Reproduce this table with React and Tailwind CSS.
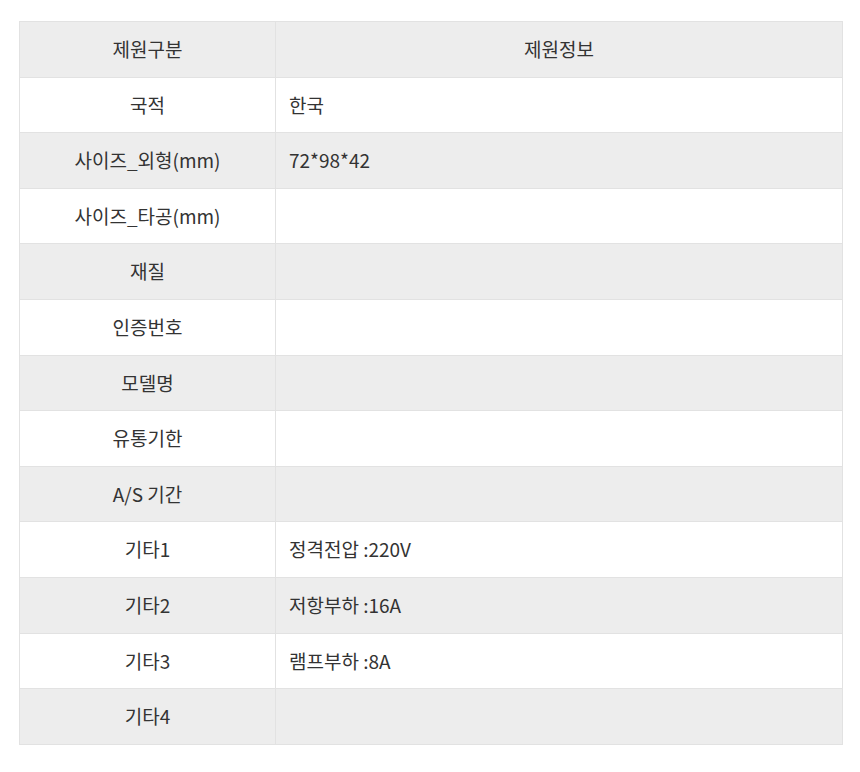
import React from "react";

const rows = [
  ["국적", "한국"],
  ["사이즈_외형(mm)", "72*98*42"],
  ["사이즈_타공(mm)", ""],
  ["재질", ""],
  ["인증번호", ""],
  ["모델명", ""],
  ["유통기한", ""],
  ["A/S 기간", ""],
  ["기타1", "정격전압 :220V"],
  ["기타2", "저항부하 :16A"],
  ["기타3", "램프부하 :8A"],
  ["기타4", ""],
];

export default function App() {
  return (
    <div
      className="w-[860px] h-[772px] bg-white pt-[21px] pl-[19px]"
      style={{ fontFamily: '"Noto Sans CJK KR", "Noto Sans", sans-serif' }}
    >
      <table className="w-[824px] border-collapse text-[19px] text-[#333]">
        <thead>
          <tr className="h-[55.6px] bg-[#ededed]">
            <th className="w-[256px] border border-[#e2e2e2] font-normal text-center">
              제원구분
            </th>
            <th className="border border-[#e2e2e2] font-normal text-center">
              제원정보
            </th>
          </tr>
        </thead>
        <tbody>
          {rows.map(([label, value], i) => (
            <tr
              key={label}
              className={`h-[55.6px] ${i % 2 === 1 ? "bg-[#ededed]" : "bg-white"}`}
            >
              <td className="border border-[#e2e2e2] text-center">{label}</td>
              <td className="border border-[#e2e2e2] pl-[13px]">{value}</td>
            </tr>
          ))}
        </tbody>
      </table>
    </div>
  );
}
